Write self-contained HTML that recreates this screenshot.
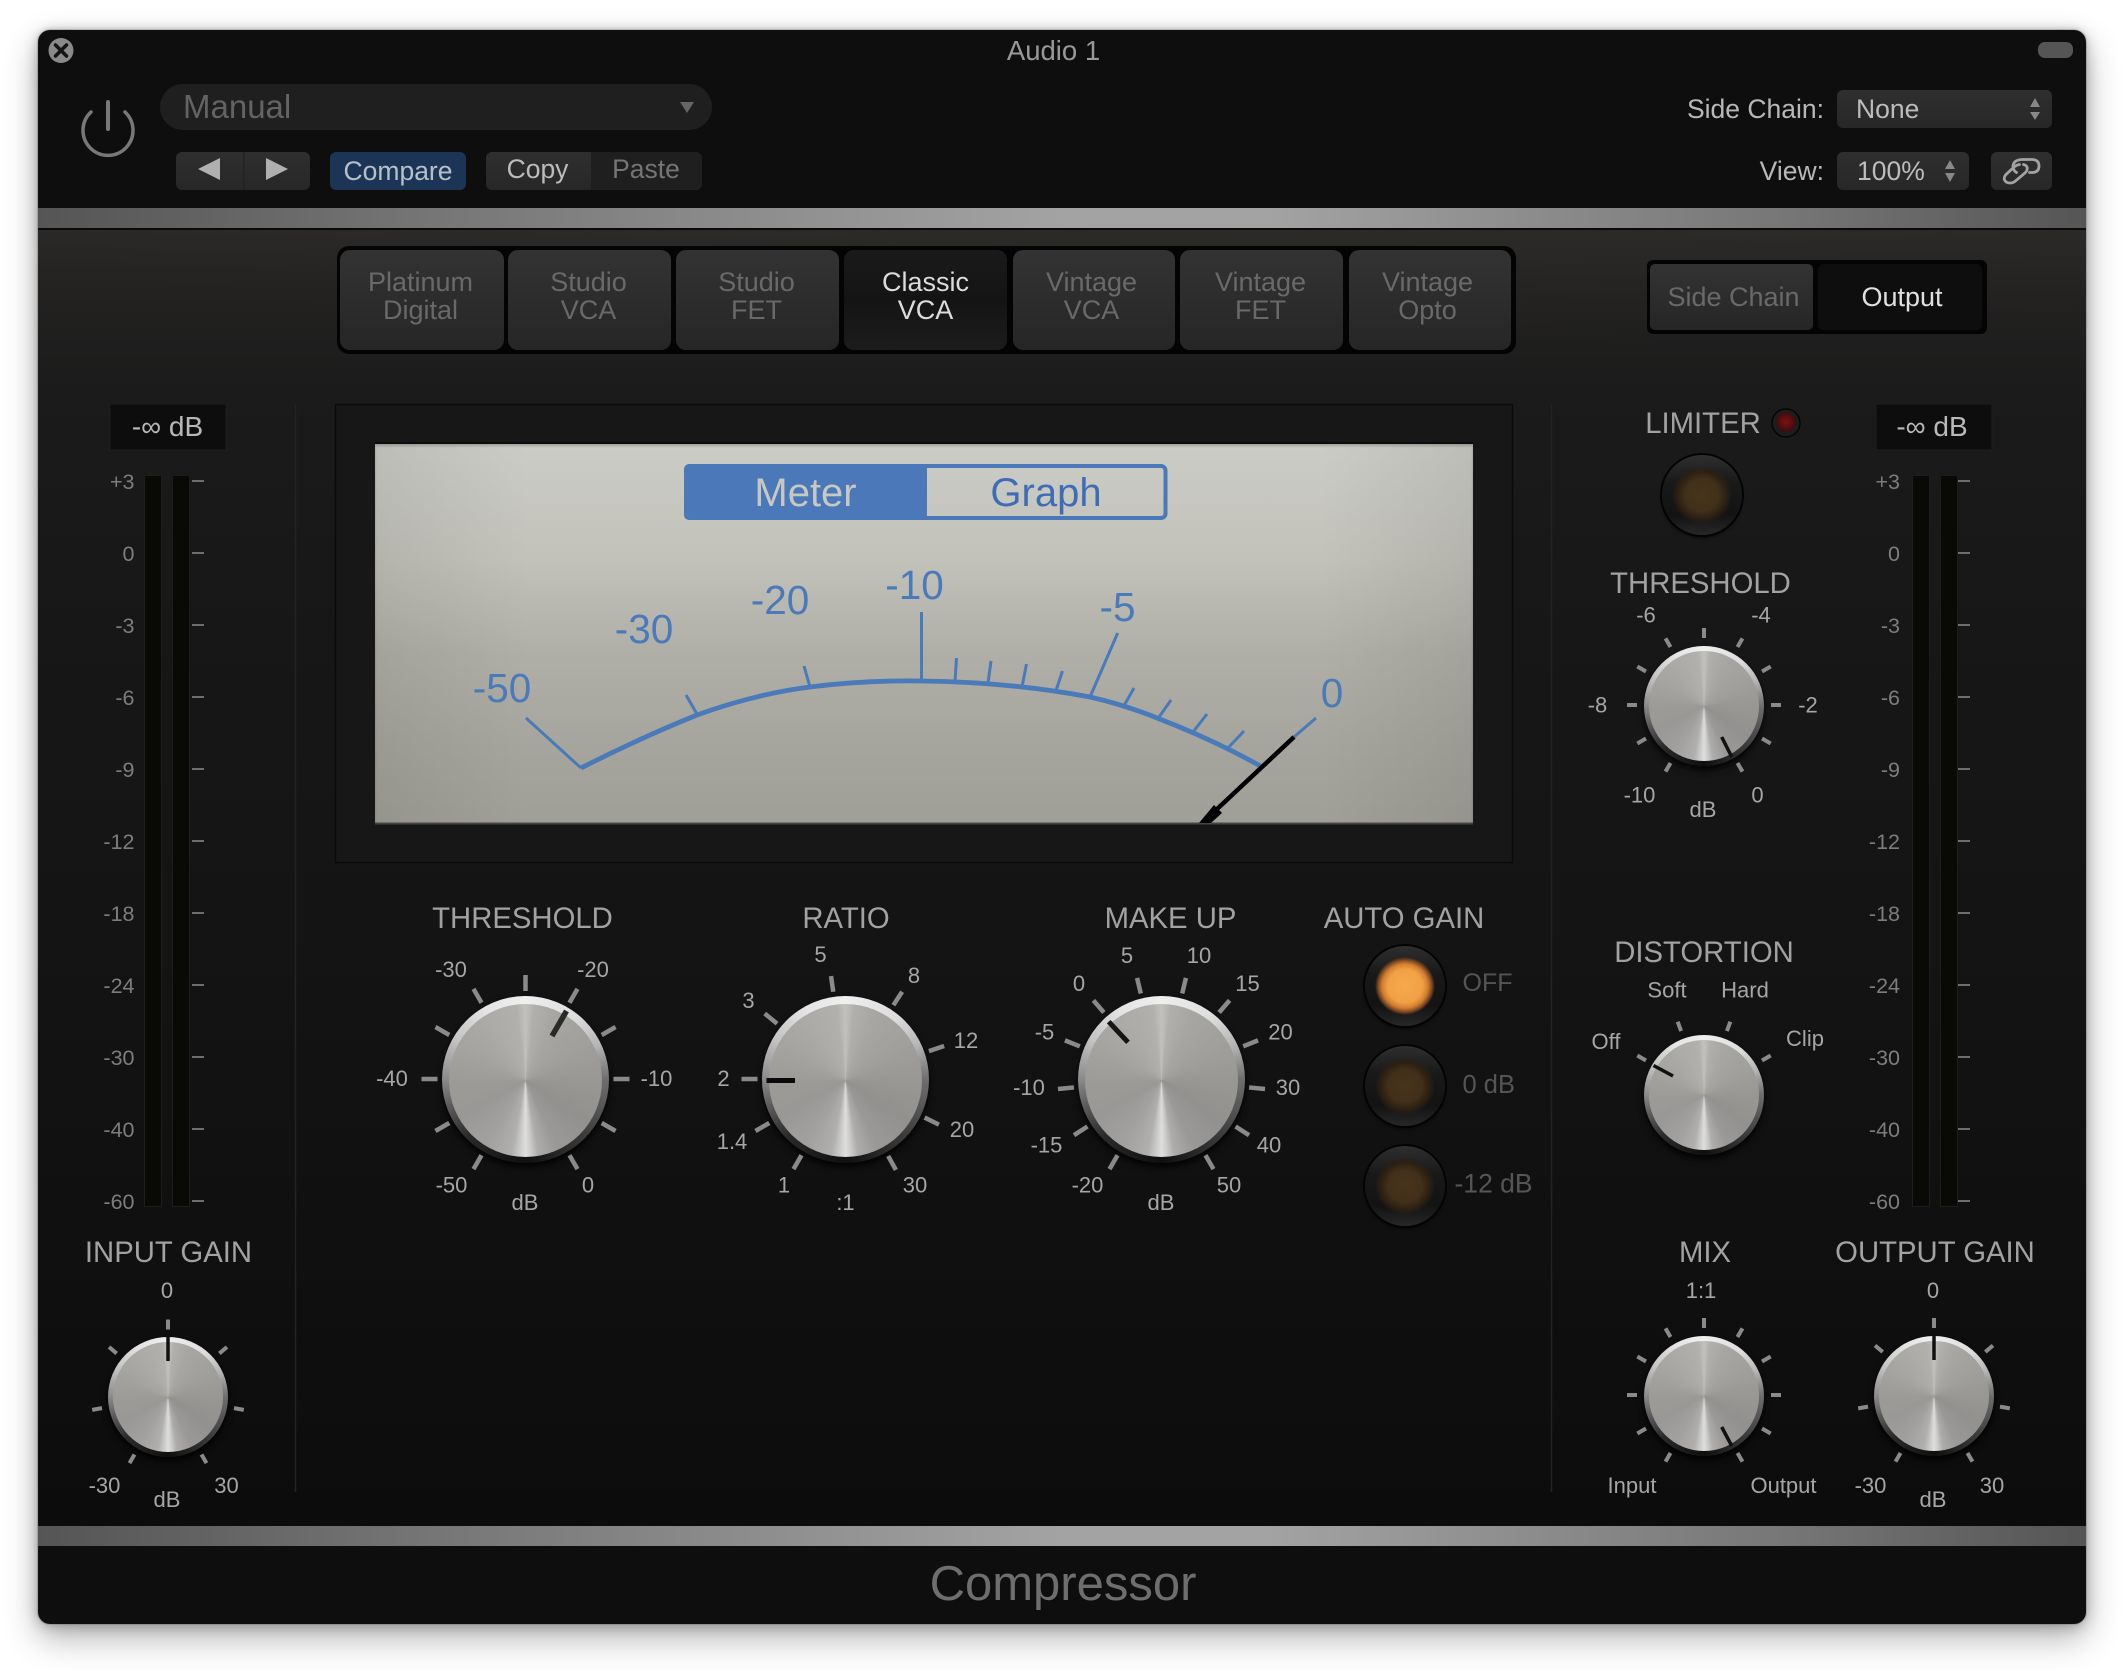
<!DOCTYPE html>
<html><head><meta charset="utf-8"><title>Compressor</title>
<style>
html,body{margin:0;padding:0;background:#fff;width:2124px;height:1670px;overflow:hidden}
#win{position:absolute;left:38px;top:30px;width:2048px;height:1594px;border-radius:12px;background:#0e0e0e;box-shadow:0 0 0 1px rgba(0,0,0,.1),0 -1px 4px rgba(0,0,0,.12),0 14px 34px rgba(0,0,0,.3),0 2px 14px rgba(0,0,0,.25);overflow:hidden}
#panel{position:absolute;left:38px;top:230px;width:2048px;height:1296px;background:radial-gradient(ellipse 60% 120px at 60% 0,rgba(50,48,44,.25),rgba(0,0,0,0)),linear-gradient(#2a2927 0,#232221 60px,#1b1b1b 160px,#171717 400px,#141414 700px,#0c0c0c 1296px)}
.bar{position:absolute;left:38px;width:2048px;height:20px;background:linear-gradient(90deg,#555 0,#777 20%,#a3a3a3 50%,#a3a3a3 60%,#777 85%,#555 100%)}
.line{position:absolute;left:38px;top:228px;width:2048px;height:2px;background:#0a0a0a}
.k{position:absolute;border-radius:50%}
.rim{background:conic-gradient(from 0deg,#efefef 0deg,#dcdcdc 40deg,#b4b4b4 65deg,#6e6e6e 90deg,#3a3a3a 135deg,#0f0f0f 180deg,#2a2a2a 225deg,#5a5a5a 250deg,#8e8e8e 272deg,#c4c4c4 300deg,#e4e4e4 330deg,#efefef 360deg);box-shadow:0 4px 7px rgba(0,0,0,.85)}
.face{background:conic-gradient(from 0deg,#c2c1be 0deg,#b1afab 7deg,#a8a6a2 24deg,#a19f9c 60deg,#999793 90deg,#93918f 125deg,#9a9997 155deg,#adacab 170deg,#cdcdcc 176deg,#dedede 180deg,#cdcdcc 184deg,#b0afae 191deg,#a2a19f 210deg,#9a9896 240deg,#9d9b97 270deg,#a6a4a0 300deg,#adaba7 330deg,#b2b0ac 353deg,#c2c1be 360deg)}
.btn{background:linear-gradient(#2f2f2f 0,#191919 35%,#131313 75%,#272727 100%);box-shadow:0 0 0 2px #040404,0 3px 3px rgba(0,0,0,.6)}
.dim{background:radial-gradient(closest-side,#46341b 0,#42301a 55%,#2c2013 82%,rgba(20,17,13,0) 100%)}
.on{background:radial-gradient(closest-side,#f6a94f 0,#f2a044 58%,#d27e32 76%,#7a4620 90%,rgba(42,26,16,0) 100%)}
#face{position:absolute;left:375px;top:444px;width:1098px;height:379px;background:linear-gradient(90deg,rgba(0,0,0,.07),rgba(0,0,0,0) 14%,rgba(0,0,0,0) 86%,rgba(0,0,0,.07)),linear-gradient(#cbccc6 0,#c2c2ba 30%,#b0afa7 55%,#a6a59d 80%,#a09f97 100%);box-shadow:inset 0 2px 2px rgba(0,0,0,.2)}
#o{position:absolute;left:0;top:0}
text{font-family:"Liberation Sans",sans-serif}
.s{font-size:22px;fill:#a6a6a6;text-anchor:middle}
.t{font-size:29.3px;fill:#a2a2a2;text-anchor:middle}
.l{font-size:21.5px;fill:#7d7d7d;text-anchor:end}
.h{font-size:26.5px}
.tab{font-size:27px;text-anchor:middle;fill:#696969}
.v{font-size:40.5px;fill:#4a7ab9;text-anchor:middle}
</style></head><body>
<div id="win"></div>
<div id="panel"></div>
<div class="bar" style="top:208px"></div><div class="line"></div>
<div class="bar" style="top:1526px"></div>
<div id="face"></div>

<div class="k rim" style="left:442px;top:996px;width:167px;height:167px"></div><div class="k face" style="left:449px;top:1004px;width:153px;height:153px"></div>
<div class="k rim" style="left:762px;top:996px;width:167px;height:167px"></div><div class="k face" style="left:769px;top:1004px;width:153px;height:153px"></div>
<div class="k rim" style="left:1078px;top:996px;width:167px;height:167px"></div><div class="k face" style="left:1085px;top:1004px;width:153px;height:153px"></div>

<div class="k rim" style="left:1644px;top:646px;width:120px;height:120px"></div><div class="k face" style="left:1649px;top:651px;width:110px;height:110px"></div>
<div class="k rim" style="left:1644px;top:1035px;width:120px;height:120px"></div><div class="k face" style="left:1649px;top:1040px;width:110px;height:110px"></div>
<div class="k rim" style="left:1644px;top:1336px;width:120px;height:120px"></div><div class="k face" style="left:1649px;top:1341px;width:110px;height:110px"></div>
<div class="k rim" style="left:1874px;top:1336px;width:120px;height:120px"></div><div class="k face" style="left:1879px;top:1341px;width:110px;height:110px"></div>
<div class="k rim" style="left:108px;top:1337px;width:120px;height:120px"></div><div class="k face" style="left:113px;top:1342px;width:110px;height:110px"></div>

<div class="k btn" style="left:1365px;top:946px;width:80px;height:80px"></div><div class="k on" style="left:1375px;top:957px;width:60px;height:58px"></div>
<div class="k btn" style="left:1365px;top:1046px;width:80px;height:80px"></div><div class="k dim" style="left:1375px;top:1057px;width:60px;height:58px"></div>
<div class="k btn" style="left:1365px;top:1146px;width:80px;height:80px"></div><div class="k dim" style="left:1375px;top:1157px;width:60px;height:58px"></div>
<div class="k btn" style="left:1662px;top:455px;width:80px;height:80px"></div><div class="k dim" style="left:1672px;top:466px;width:60px;height:58px"></div>

<svg id="o" width="2124" height="1670" viewBox="0 0 2124 1670" xmlns="http://www.w3.org/2000/svg">
<defs>
<linearGradient id="gb" x1="0" y1="0" x2="0" y2="1"><stop offset="0" stop-color="#2f2f2f"/><stop offset="1" stop-color="#272727"/></linearGradient>
<linearGradient id="gt" x1="0" y1="0" x2="0" y2="1"><stop offset="0" stop-color="#333"/><stop offset="1" stop-color="#262626"/></linearGradient>
<linearGradient id="gc" x1="0" y1="0" x2="0" y2="1"><stop offset="0" stop-color="#1a1a1a"/><stop offset=".5" stop-color="#141414"/><stop offset="1" stop-color="#1c1c1c"/></linearGradient>
<path id="L" d="M0-88V-104"/>
<path id="S" d="M0-67V-77"/>
<radialGradient id="gr"><stop offset="0" stop-color="#7c1212"/><stop offset="1" stop-color="#440b0b"/></radialGradient>
</defs>

<!-- header -->
<circle cx="61" cy="50.500" r="12.500" fill="#8a8a8a"/>
<path d="M55.500 45L66.500 56M66.500 45L55.500 56" stroke="#141414" stroke-width="3.500" stroke-linecap="round"/>
<text x="1053.500" y="60" font-size="27.500" fill="#999" text-anchor="middle">Audio 1</text>
<rect x="2038" y="42" width="35" height="16" rx="7" fill="#555"/>
<path d="M91 112A25 25 0 1 0 125 112" fill="none" stroke="#787878" stroke-width="3.500" stroke-linecap="round"/>
<path d="M108 102V129" stroke="#787878" stroke-width="4" stroke-linecap="round"/>
<rect x="160" y="84" width="552" height="46" rx="23" fill="#1f1f1f"/>
<text x="183" y="118" font-size="33" fill="#636363">Manual</text>
<path d="M680 102H694L687 113Z" fill="#666"/>

<rect x="176" y="152" width="134" height="38" rx="6" fill="url(#gb)"/>
<rect x="243" y="152" width="1.500" height="38" fill="#222"/>
<path d="M220 158V180L198 169Z M266 158V180L288 169Z" fill="#b0b0b0"/>
<rect x="330" y="152" width="136" height="38" rx="6" fill="#1c3456"/>
<text class="h" x="398" y="180" fill="#b6c0ca" text-anchor="middle">Compare</text>
<rect x="486" y="152" width="216" height="38" rx="6" fill="#1f1f1f"/>
<path d="M492 152H591V190H492A6 6 0 0 1 486 184V158A6 6 0 0 1 492 152Z" fill="url(#gb)"/>
<text class="h" x="537.500" y="178" fill="#bcbcbc" text-anchor="middle">Copy</text>
<text class="h" x="646" y="178" fill="#757575" text-anchor="middle">Paste</text>

<text class="h" x="1824" y="118" fill="#b8b8b8" text-anchor="end">Side Chain:</text>
<rect x="1837" y="90" width="215" height="38" rx="6" fill="url(#gb)"/>
<text class="h" x="1856" y="118" fill="#bcbcbc">None</text>
<path d="M2035 98L2040 107H2030Z M2030 112H2040L2035 120Z" fill="#888"/>
<text class="h" x="1824" y="180" fill="#b8b8b8" text-anchor="end">View:</text>
<rect x="1837" y="152" width="132" height="38" rx="6" fill="url(#gb)"/>
<text class="h" x="1857" y="180" fill="#bcbcbc">100%</text>
<path d="M1950 160L1955 169H1945Z M1945 173H1955L1950 182Z" fill="#888"/>
<rect x="1991" y="152" width="61" height="38" rx="6" fill="url(#gb)"/>
<g fill="none" stroke="#a2a2a2" stroke-width="2.800" stroke-linecap="round">
<path d="M2029.500 172.500H2033Q2039 172 2039 166Q2039 159.500 2031.500 159.500H2022Q2013.500 160 2013 166Q2013 170.500 2016.500 172.500"/>
<path d="M2019.500 164.500Q2016 165 2013 168L2006 174.500Q2003.500 177.500 2004.500 180Q2006 183 2010 183Q2013.500 183 2016 180.500L2025 173Q2028 170 2027 167Q2026 165 2023.500 164.500"/>
</g>

<!-- tabs -->
<rect x="337" y="246" width="1179" height="108" rx="12" fill="#040404"/>
<rect x="340" y="250" width="164" height="100" rx="10" fill="url(#gt)"/>
<rect x="508" y="250" width="163" height="100" rx="10" fill="url(#gt)"/>
<rect x="676" y="250" width="163" height="100" rx="10" fill="url(#gt)"/>
<rect x="844" y="250" width="163" height="100" rx="10" fill="url(#gc)"/>
<rect x="1013" y="250" width="162" height="100" rx="10" fill="url(#gt)"/>
<rect x="1180" y="250" width="163" height="100" rx="10" fill="url(#gt)"/>
<rect x="1349" y="250" width="162" height="100" rx="10" fill="url(#gt)"/>
<text class="tab" x="420.500" y="291">Platinum</text><text class="tab" x="420.500" y="319">Digital</text>
<text class="tab" x="588.500" y="291">Studio</text><text class="tab" x="588.500" y="319">VCA</text>
<text class="tab" x="756.500" y="291">Studio</text><text class="tab" x="756.500" y="319">FET</text>
<text class="tab" x="925.500" y="291" style="fill:#dcdcdc">Classic</text><text class="tab" x="925.500" y="319" style="fill:#dcdcdc">VCA</text>
<text class="tab" x="1091.500" y="291">Vintage</text><text class="tab" x="1091.500" y="319">VCA</text>
<text class="tab" x="1260.500" y="291">Vintage</text><text class="tab" x="1260.500" y="319">FET</text>
<text class="tab" x="1427.500" y="291">Vintage</text><text class="tab" x="1427.500" y="319">Opto</text>

<rect x="1647" y="260" width="340" height="74" rx="6" fill="#040404"/>
<rect x="1650" y="264" width="163" height="66" rx="5" fill="url(#gt)"/>
<rect x="1818" y="264" width="164" height="66" rx="5" fill="#0e0e0e"/>
<text class="tab" x="1733.500" y="306">Side Chain</text>
<text class="tab" x="1902" y="306" style="fill:#e0e0e0">Output</text>

<!-- meter frame -->
<path d="M336 405H1513V863H336ZM375 444V823H1473V444Z" fill="#171717" fill-rule="evenodd"/>
<rect x="335.500" y="404.500" width="1177" height="458" fill="none" stroke="#0a0a0a" stroke-width="1.500"/>
<path d="M375 443H1473" stroke="#0c0c0c" stroke-width="2"/>
<path d="M375 823.500H1473" stroke="#444" stroke-width="2"/>
<rect x="684" y="464" width="243" height="56" rx="5" fill="#4a78b8"/>
<path d="M920 466H1161A4.500 4.500 0 0 1 1165.500 470.500V513.500A4.500 4.500 0 0 1 1161 518H920" fill="none" stroke="#4a78b8" stroke-width="4"/>
<text x="805.500" y="506" font-size="40" fill="#c8c8c2" text-anchor="middle">Meter</text>
<text x="1046" y="506" font-size="40" fill="#3f6cb6" text-anchor="middle">Graph</text>
<path d="M581 768Q640 738 697 715Q755 694 810 687Q865 680 921 681Q1010 682 1090 697Q1125 705 1157 718Q1196 733 1230 750Q1248 759 1262 767" fill="none" stroke="#4a7ab9" stroke-width="4.800"/>
<path d="M526 718L581 768M686 695L697.500 715M804 666L810 687M921.500 612V681M956.500 658L955 682M991 661L988 683M1026.500 664L1022 687M1062.500 671L1055.500 692M1117.700 633L1090 697M1134 688L1122.700 708M1171 700L1157.700 719M1207 714L1193 732M1244 731L1228 748M1294 737L1316 718" fill="none" stroke="#4a7ab9" stroke-width="3"/>
<path d="M1294 737L1215 811" fill="none" stroke="#000" stroke-width="4.500"/>
<path d="M1214 805L1222 813L1211 823H1199Z" fill="#000"/>
<text class="v" x="502" y="702">-50</text>
<text class="v" x="644" y="643">-30</text>
<text class="v" x="780" y="614">-20</text>
<text class="v" x="914.500" y="599">-10</text>
<text class="v" x="1117.500" y="621">-5</text>
<text class="v" x="1332" y="707">0</text>

<!-- dividers -->
<path d="M295.500 404V1492M1551.500 404V1492" stroke="#232323" stroke-width="1.500"/>

<!-- left meter -->
<rect x="110" y="404" width="116" height="46" fill="#0d0d0d" stroke="#1e1e1e"/>
<text x="167.500" y="436" font-size="28" fill="#b8b8b8" text-anchor="middle">-∞ dB</text>
<rect x="144.500" y="475.500" width="17" height="731" fill="#090905" stroke="#1d1d1d"/>
<rect x="172.500" y="475.500" width="17" height="731" fill="#090905" stroke="#1d1d1d"/>
<path d="M192 481H204M192 553H204M192 625H204M192 697H204M192 769H204M192 841H204M192 913H204M192 985H204M192 1057H204M192 1129H204M192 1201H204" stroke="#6e6e6e" stroke-width="2"/>
<text class="l" x="134.500" y="489">+3</text><text class="l" x="134.500" y="561">0</text><text class="l" x="134.500" y="633">-3</text><text class="l" x="134.500" y="705">-6</text><text class="l" x="134.500" y="777">-9</text><text class="l" x="134.500" y="849">-12</text><text class="l" x="134.500" y="921">-18</text><text class="l" x="134.500" y="993">-24</text><text class="l" x="134.500" y="1065">-30</text><text class="l" x="134.500" y="1137">-40</text><text class="l" x="134.500" y="1209">-60</text>

<!-- right meter -->
<rect x="1876" y="404" width="116" height="46" fill="#0d0d0d" stroke="#1e1e1e"/>
<text x="1932" y="436" font-size="28" fill="#b8b8b8" text-anchor="middle">-∞ dB</text>
<rect x="1912.500" y="475.500" width="17" height="731" fill="#090905" stroke="#1d1d1d"/>
<rect x="1940.500" y="475.500" width="17" height="731" fill="#090905" stroke="#1d1d1d"/>
<path d="M1958 481H1970M1958 553H1970M1958 625H1970M1958 697H1970M1958 769H1970M1958 841H1970M1958 913H1970M1958 985H1970M1958 1057H1970M1958 1129H1970M1958 1201H1970" stroke="#6e6e6e" stroke-width="2"/>
<text class="l" x="1900" y="489">+3</text><text class="l" x="1900" y="561">0</text><text class="l" x="1900" y="633">-3</text><text class="l" x="1900" y="705">-6</text><text class="l" x="1900" y="777">-9</text><text class="l" x="1900" y="849">-12</text><text class="l" x="1900" y="921">-18</text><text class="l" x="1900" y="993">-24</text><text class="l" x="1900" y="1065">-30</text><text class="l" x="1900" y="1137">-40</text><text class="l" x="1900" y="1209">-60</text>

<!-- titles -->
<text class="t" x="522.500" y="928">THRESHOLD</text>
<text class="t" x="846" y="928">RATIO</text>
<text class="t" x="1170.500" y="928">MAKE UP</text>
<text class="t" x="1404" y="928">AUTO GAIN</text>
<text class="t" x="1703" y="433">LIMITER</text>
<text class="t" x="1700.500" y="593">THRESHOLD</text>
<text class="t" x="1704" y="962">DISTORTION</text>
<text class="t" x="168.500" y="1262">INPUT GAIN</text>
<text class="t" x="1705" y="1262">MIX</text>
<text class="t" x="1935" y="1262">OUTPUT GAIN</text>

<!-- threshold big -->
<g transform="translate(525.500 1079)" stroke="#8a8a8a" stroke-width="4.500"><use href="#L" transform="rotate(-150)"/><use href="#L" transform="rotate(-120)"/><use href="#L" transform="rotate(-90)"/><use href="#L" transform="rotate(-60)"/><use href="#L" transform="rotate(-30)"/><use href="#L"/><use href="#L" transform="rotate(30)"/><use href="#L" transform="rotate(60)"/><use href="#L" transform="rotate(90)"/><use href="#L" transform="rotate(120)"/><use href="#L" transform="rotate(150)"/></g>
<path d="M566.500 1011L552 1036" stroke="#2a2a2a" stroke-width="5.500"/>
<text class="s" x="451" y="977">-30</text><text class="s" x="593" y="977">-20</text><text class="s" x="392" y="1086">-40</text><text class="s" x="656.500" y="1086">-10</text><text class="s" x="451.500" y="1192.500">-50</text><text class="s" x="588" y="1192.500">0</text><text class="s" x="525" y="1210">dB</text>

<!-- ratio -->
<g transform="translate(845.500 1079)" stroke="#8a8a8a" stroke-width="4.500"><use href="#L" transform="rotate(-150)"/><use href="#L" transform="rotate(-120)"/><use href="#L" transform="rotate(-90)"/><use href="#L" transform="rotate(-51)"/><use href="#L" transform="rotate(-8)"/><use href="#L" transform="rotate(33)"/><use href="#L" transform="rotate(71.500)"/><use href="#L" transform="rotate(116)"/><use href="#L" transform="rotate(151)"/></g>
<path d="M766.500 1080.500H795" stroke="#0a0a0a" stroke-width="5"/>
<text class="s" x="820.500" y="962">5</text><text class="s" x="914" y="983">8</text><text class="s" x="748.500" y="1008">3</text><text class="s" x="966" y="1048">12</text><text class="s" x="723.500" y="1086">2</text><text class="s" x="962" y="1137">20</text><text class="s" x="732" y="1149">1.4</text><text class="s" x="784" y="1192.500">1</text><text class="s" x="915" y="1192.500">30</text><text class="s" x="845.500" y="1210">:1</text>

<!-- make up -->
<g transform="translate(1161.500 1079)" stroke="#8a8a8a" stroke-width="4.500"><use href="#L" transform="rotate(-150)"/><use href="#L" transform="rotate(-122.700)"/><use href="#L" transform="rotate(-95.500)"/><use href="#L" transform="rotate(-68.200)"/><use href="#L" transform="rotate(-40.900)"/><use href="#L" transform="rotate(-13.600)"/><use href="#L" transform="rotate(13.600)"/><use href="#L" transform="rotate(40.900)"/><use href="#L" transform="rotate(68.200)"/><use href="#L" transform="rotate(95.500)"/><use href="#L" transform="rotate(122.700)"/><use href="#L" transform="rotate(150)"/></g>
<path d="M1108.700 1021.700L1128 1042.300" stroke="#141414" stroke-width="5"/>
<text class="s" x="1127" y="963">5</text><text class="s" x="1199" y="963">10</text><text class="s" x="1079" y="991">0</text><text class="s" x="1247.500" y="991">15</text><text class="s" x="1044.500" y="1039.500">-5</text><text class="s" x="1280.500" y="1039.500">20</text><text class="s" x="1029" y="1095">-10</text><text class="s" x="1288" y="1095">30</text><text class="s" x="1046.500" y="1152.500">-15</text><text class="s" x="1269" y="1152.500">40</text><text class="s" x="1087.500" y="1192.500">-20</text><text class="s" x="1229" y="1192.500">50</text><text class="s" x="1161" y="1210">dB</text>

<!-- auto gain labels -->
<text x="1462.500" y="991" font-size="25" fill="#555">OFF</text>
<text x="1462.500" y="1093" font-size="25.500" fill="#555">0 dB</text>
<text x="1454.500" y="1192.500" font-size="26.500" fill="#555">-12 dB</text>

<!-- limiter led -->
<circle cx="1786" cy="423" r="14" fill="#1d1d1d" stroke="#050505" stroke-width="1.500"/>
<circle cx="1786" cy="422" r="9.500" fill="url(#gr)"/>

<!-- limiter threshold -->
<g transform="translate(1704 705)" stroke="#8a8a8a" stroke-width="4"><use href="#S" transform="rotate(-150)"/><use href="#S" transform="rotate(-120)"/><use href="#S" transform="rotate(-90)"/><use href="#S" transform="rotate(-60)"/><use href="#S" transform="rotate(-30)"/><use href="#S"/><use href="#S" transform="rotate(30)"/><use href="#S" transform="rotate(60)"/><use href="#S" transform="rotate(90)"/><use href="#S" transform="rotate(120)"/><use href="#S" transform="rotate(150)"/></g>
<path d="M1721.700 737L1731.800 757" stroke="#111" stroke-width="3.500"/>
<text class="s" x="1646" y="622.500">-6</text><text class="s" x="1761" y="622.500">-4</text><text class="s" x="1597.500" y="712.500">-8</text><text class="s" x="1808" y="712.500">-2</text><text class="s" x="1639.500" y="802.500">-10</text><text class="s" x="1757.500" y="802.500">0</text><text class="s" x="1703" y="817">dB</text>

<!-- distortion -->
<g transform="translate(1704 1094)" stroke="#8a8a8a" stroke-width="4"><use href="#S" transform="rotate(-60)"/><use href="#S" transform="rotate(-20)"/><use href="#S" transform="rotate(20)"/><use href="#S" transform="rotate(60)"/></g>
<path d="M1653.500 1065.500L1673 1076" stroke="#111" stroke-width="3.500"/>
<text class="s" x="1667" y="997.500">Soft</text><text class="s" x="1745" y="997.500">Hard</text><text class="s" x="1606" y="1049">Off</text><text class="s" x="1805" y="1046">Clip</text>

<!-- mix -->
<g transform="translate(1704 1395)" stroke="#8a8a8a" stroke-width="4"><use href="#S" transform="rotate(-150)"/><use href="#S" transform="rotate(-120)"/><use href="#S" transform="rotate(-90)"/><use href="#S" transform="rotate(-60)"/><use href="#S" transform="rotate(-30)"/><use href="#S"/><use href="#S" transform="rotate(30)"/><use href="#S" transform="rotate(60)"/><use href="#S" transform="rotate(90)"/><use href="#S" transform="rotate(120)"/><use href="#S" transform="rotate(150)"/></g>
<path d="M1721.700 1427L1731.800 1446" stroke="#111" stroke-width="3.500"/>
<text class="s" x="1701" y="1298">1:1</text><text class="s" x="1632" y="1493">Input</text><text class="s" x="1783.500" y="1493">Output</text>

<!-- output gain -->
<g transform="translate(1934 1395)" stroke="#8a8a8a" stroke-width="4"><use href="#S" transform="rotate(-150)"/><use href="#S" transform="rotate(-100)"/><use href="#S" transform="rotate(-50)"/><use href="#S"/><use href="#S" transform="rotate(50)"/><use href="#S" transform="rotate(100)"/><use href="#S" transform="rotate(150)"/></g>
<path d="M1934 1336V1360" stroke="#111" stroke-width="3.500"/>
<text class="s" x="1933" y="1298">0</text><text class="s" x="1870.500" y="1493">-30</text><text class="s" x="1992" y="1493">30</text><text class="s" x="1933" y="1507">dB</text>

<!-- input gain -->
<g transform="translate(168 1396.500)" stroke="#8a8a8a" stroke-width="4"><use href="#S" transform="rotate(-150)"/><use href="#S" transform="rotate(-100)"/><use href="#S" transform="rotate(-50)"/><use href="#S"/><use href="#S" transform="rotate(50)"/><use href="#S" transform="rotate(100)"/><use href="#S" transform="rotate(150)"/></g>
<path d="M168 1337V1361" stroke="#111" stroke-width="3.500"/>
<text class="s" x="167" y="1298">0</text><text class="s" x="104.500" y="1493">-30</text><text class="s" x="226.500" y="1493">30</text><text class="s" x="167" y="1507">dB</text>

<text x="1063" y="1600" font-size="49" fill="#6e6e6e" text-anchor="middle">Compressor</text>
</svg>
</body></html>
